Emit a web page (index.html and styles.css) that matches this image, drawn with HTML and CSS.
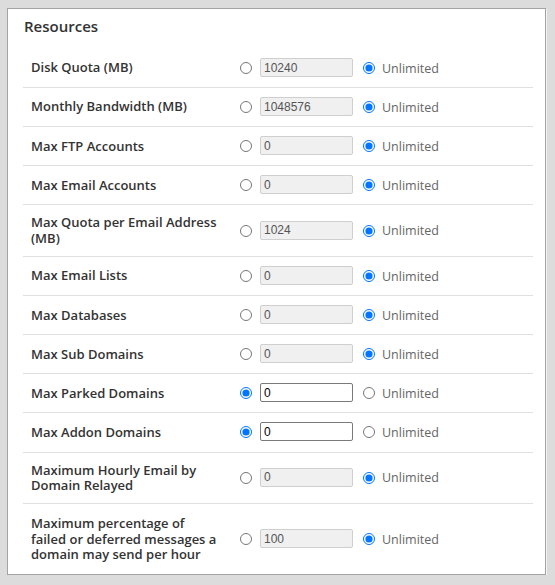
FILE: index.html
```html
<!DOCTYPE html>
<html>
<head>
<meta charset="utf-8">
<link rel="stylesheet" href="styles.css">
</head>
<body>
<div class="panel">
  <h3 class="title">Resources</h3>
  <div class="rows">
    <div class="row">
      <div class="label">Disk Quota (MB)</div>
      <div class="controls"><input type="radio" class="radio" name="r1"><input class="field" type="text" value="10240" readonly><input type="radio" class="radio radio-unl" name="r1" checked><span class="unl">Unlimited</span></div>
    </div>
    <div class="row">
      <div class="label">Monthly Bandwidth (MB)</div>
      <div class="controls"><input type="radio" class="radio" name="r2"><input class="field" type="text" value="1048576" readonly><input type="radio" class="radio radio-unl" name="r2" checked><span class="unl">Unlimited</span></div>
    </div>
    <div class="row">
      <div class="label">Max FTP Accounts</div>
      <div class="controls"><input type="radio" class="radio" name="r3"><input class="field" type="text" value="0" readonly><input type="radio" class="radio radio-unl" name="r3" checked><span class="unl">Unlimited</span></div>
    </div>
    <div class="row">
      <div class="label">Max Email Accounts</div>
      <div class="controls"><input type="radio" class="radio" name="r4"><input class="field" type="text" value="0" readonly><input type="radio" class="radio radio-unl" name="r4" checked><span class="unl">Unlimited</span></div>
    </div>
    <div class="row">
      <div class="label">Max Quota per Email Address (MB)</div>
      <div class="controls"><input type="radio" class="radio" name="r5"><input class="field" type="text" value="1024" readonly><input type="radio" class="radio radio-unl" name="r5" checked><span class="unl">Unlimited</span></div>
    </div>
    <div class="row">
      <div class="label">Max Email Lists</div>
      <div class="controls"><input type="radio" class="radio" name="r6"><input class="field" type="text" value="0" readonly><input type="radio" class="radio radio-unl" name="r6" checked><span class="unl">Unlimited</span></div>
    </div>
    <div class="row">
      <div class="label">Max Databases</div>
      <div class="controls"><input type="radio" class="radio" name="r7"><input class="field" type="text" value="0" readonly><input type="radio" class="radio radio-unl" name="r7" checked><span class="unl">Unlimited</span></div>
    </div>
    <div class="row">
      <div class="label">Max Sub Domains</div>
      <div class="controls"><input type="radio" class="radio" name="r8"><input class="field" type="text" value="0" readonly><input type="radio" class="radio radio-unl" name="r8" checked><span class="unl">Unlimited</span></div>
    </div>
    <div class="row">
      <div class="label">Max Parked Domains</div>
      <div class="controls"><input type="radio" class="radio" name="r9" checked><input class="field field-on" type="text" value="0"><input type="radio" class="radio radio-unl" name="r9"><span class="unl">Unlimited</span></div>
    </div>
    <div class="row">
      <div class="label">Max Addon Domains</div>
      <div class="controls"><input type="radio" class="radio" name="r10" checked><input class="field field-on" type="text" value="0"><input type="radio" class="radio radio-unl" name="r10"><span class="unl">Unlimited</span></div>
    </div>
    <div class="row">
      <div class="label">Maximum Hourly Email by Domain Relayed</div>
      <div class="controls"><input type="radio" class="radio" name="r11"><input class="field" type="text" value="0" readonly><input type="radio" class="radio radio-unl" name="r11" checked><span class="unl">Unlimited</span></div>
    </div>
    <div class="row">
      <div class="label">Maximum percentage of failed or deferred messages a domain may send per hour</div>
      <div class="controls"><input type="radio" class="radio" name="r12"><input class="field" type="text" value="100" readonly><input type="radio" class="radio radio-unl" name="r12" checked><span class="unl">Unlimited</span></div>
    </div>
  </div>
</div>
</body>
</html>
```
FILE: styles.css
```css
html, body {
  margin: 0;
  padding: 0;
  background: #dcdcdc;
}
body {
  padding: 8px 0 0 7px;
  font-family: "Open Sans", "Liberation Sans", sans-serif;
}
.panel {
  width: 539px;
  background: #fff;
  border: 1px solid #a3a3a3;
  box-shadow: 1px 1px 0 #f4f4f4;
  padding: 7px 12px 2px 15px;
  box-sizing: border-box;
}
.title {
  margin: 0 0 13px 1px;
  font-size: 15px;
  line-height: 20px;
  font-weight: 600;
  color: #333;
}
.row {
  display: flex;
  align-items: center;
  padding: 10px 0 10.1px 8px;
  border-bottom: 1px solid #e0e0e0;
}
.row:last-child {
  border-bottom: none;
  padding-top: 12px;
}
.label {
  width: 188px;
  flex: none;
  font-size: 13px;
  line-height: 15.3px;
  font-weight: 600;
  color: #333;
}
.controls {
  display: flex;
  align-items: center;
  height: 18px;
  margin-left: 21px;
}
.radio {
  width: 12px;
  height: 12px;
  margin: 0;
  flex: none;
}
.field {
  box-sizing: border-box;
  width: 93px;
  height: 19px;
  margin: -1px 0 0 8px;
  padding: 0 3px;
  border: 1px solid #cfcfcf;
  border-radius: 2px;
  background: #f0f0f0;
  color: #555;
  font-family: "Liberation Sans", Arial, sans-serif;
  font-size: 12px;
  outline: none;
}
.field-on {
  background: #fff;
  border-color: #7a7a7a;
  color: #000;
}
.radio-unl {
  margin-left: 10px;
}
.unl {
  margin-left: 7px;
  font-size: 12.5px;
  color: #666;
  line-height: 15px;
}
```
